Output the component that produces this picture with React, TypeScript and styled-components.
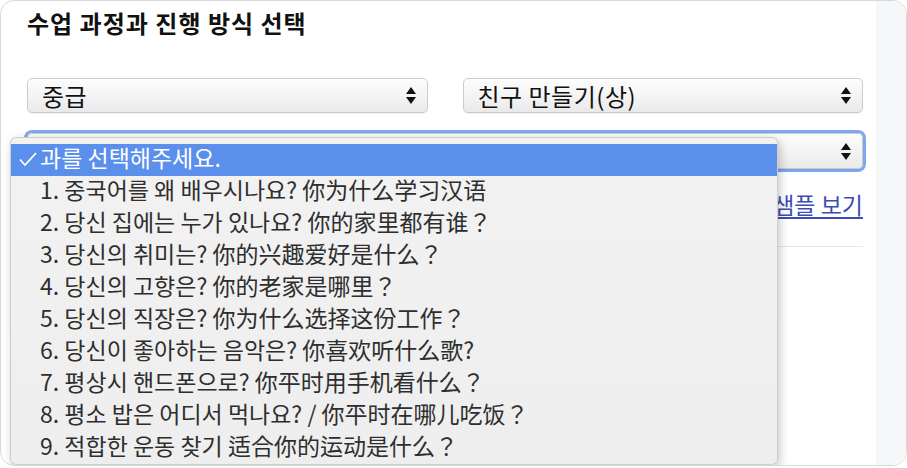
import React from "react";
import styled, { createGlobalStyle } from "styled-components";

const Global = createGlobalStyle`
  html, body { margin: 0; padding: 0; background: #ffffff; }
  body { font-family: "Noto Sans CJK KR", "Noto Sans", sans-serif; }
  * { box-sizing: border-box; }
`;

const Frame = styled.div`
  position: relative;
  width: 907px;
  height: 466px;
  border: 1px solid #d9d9d9;
  border-radius: 14px;
  overflow: hidden;
  display: grid;
  grid-template-columns: 1fr 30px;
  background: #ffffff;
`;

const Main = styled.div`
  padding: 0 13px 0 26px;
  display: flex;
  flex-direction: column;
`;

const Strip = styled.div`
  background: #f6f7f9;
`;

const Title = styled.h1`
  margin: 6px 0 0;
  font-size: 24px;
  line-height: 32px;
  font-weight: 700;
  color: #111;
  letter-spacing: 1px;
`;

const SelectRow = styled.div`
  margin-top: 39px;
  display: grid;
  grid-template-columns: 1fr 1fr;
  column-gap: 35px;
`;

const SelectBox = styled.div<{ $focused?: boolean }>`
  height: ${(p) => (p.$focused ? 36 : 35)}px;
  border: 1px solid #cbcbcb;
  border-radius: 5px;
  background: linear-gradient(#fdfdfd 0%, #f3f3f3 55%, #e9e9e9 100%);
  box-shadow: inset 0 1px 0 #ffffff, 0 1px 1px rgba(0, 0, 0, 0.06)
    ${(p) => (p.$focused ? ", 0 0 0 3px #7fa7f0" : "")};
  display: flex;
  align-items: center;
  justify-content: space-between;
  padding: 0 11px 0 14px;
  font-size: 24px;
  letter-spacing: 0.5px;
  color: #111;
  line-height: 1;
`;

const FocusWrap = styled.div`
  margin-top: 20px;
`;

const LinkRow = styled.div`
  margin-top: 19px;
  display: flex;
  justify-content: flex-end;
  line-height: 32px;
`;

const SampleLink = styled.a`
  font-size: 23px;
  color: #3c4cb8;
  text-decoration: underline;
  text-underline-offset: 3px;
`;

const Divider = styled.hr`
  margin: 26px 0 0;
  border: 0;
  border-top: 1px solid #e8e8e8;
`;

const Dropdown = styled.div`
  position: absolute;
  left: 9px;
  top: 136px;
  width: 768px;
  height: 328px;
  padding: 6px 0 4px;
  background: linear-gradient(#f2f2f2, #eeeeee);
  border: 1px solid rgba(0, 0, 0, 0.14);
  border-radius: 6px;
  box-shadow: 2px 3px 10px rgba(0, 0, 0, 0.22);
  display: flex;
  flex-direction: column;
`;

const Option = styled.div<{ $active?: boolean }>`
  height: 32px;
  padding-bottom: 5px;
  display: grid;
  grid-template-columns: 29px 1fr;
  align-items: center;
  font-size: 23px;
  line-height: 27px;
  white-space: nowrap;
  color: ${(p) => (p.$active ? "#ffffff" : "#2e2e2e")};
  background: ${(p) => (p.$active ? "#5a8fec" : "transparent")};
`;

const CheckCell = styled.span`
  display: flex;
  align-items: center;
  padding: 3px 0 0 8px;
`;

const Arrows = () => (
  <svg width="10" height="17" viewBox="0 0 10 17">
    <path d="M5 0 L10 7 L0 7 Z" fill="#111" />
    <path d="M0 10 L10 10 L5 17 Z" fill="#111" />
  </svg>
);

const Check = () => (
  <svg width="18" height="14" viewBox="0 0 18 14">
    <path d="M1 7.5 L6 13 L17 1" fill="none" stroke="#fff" strokeWidth="1.8" />
  </svg>
);

const items = [
  "1. 중국어를 왜 배우시나요? 你为什么学习汉语",
  "2. 당신 집에는 누가 있나요? 你的家里都有谁？",
  "3. 당신의 취미는? 你的兴趣爱好是什么？",
  "4. 당신의 고향은? 你的老家是哪里？",
  "5. 당신의 직장은? 你为什么选择这份工作？",
  "6. 당신이 좋아하는 음악은? 你喜欢听什么歌?",
  "7. 평상시 핸드폰으로? 你平时用手机看什么？",
  "8. 평소 밥은 어디서 먹나요? / 你平时在哪儿吃饭？",
  "9. 적합한 운동 찾기 适合你的运动是什么？",
];

export default function App() {
  return (
    <>
      <Global />
      <Frame>
        <Main>
          <Title>수업 과정과 진행 방식 선택</Title>
          <SelectRow>
            <SelectBox>
              <span>중급</span>
              <Arrows />
            </SelectBox>
            <SelectBox>
              <span>친구 만들기(상)</span>
              <Arrows />
            </SelectBox>
          </SelectRow>
          <FocusWrap>
            <SelectBox $focused>
              <span />
              <Arrows />
            </SelectBox>
          </FocusWrap>
          <LinkRow>
            <SampleLink href="#">샘플 보기</SampleLink>
          </LinkRow>
          <Divider />
        </Main>
        <Strip />
        <Dropdown>
          <Option $active>
            <CheckCell>
              <Check />
            </CheckCell>
            <span>과를 선택해주세요.</span>
          </Option>
          {items.map((t) => (
            <Option key={t}>
              <span />
              <span>{t}</span>
            </Option>
          ))}
        </Dropdown>
      </Frame>
    </>
  );
}
